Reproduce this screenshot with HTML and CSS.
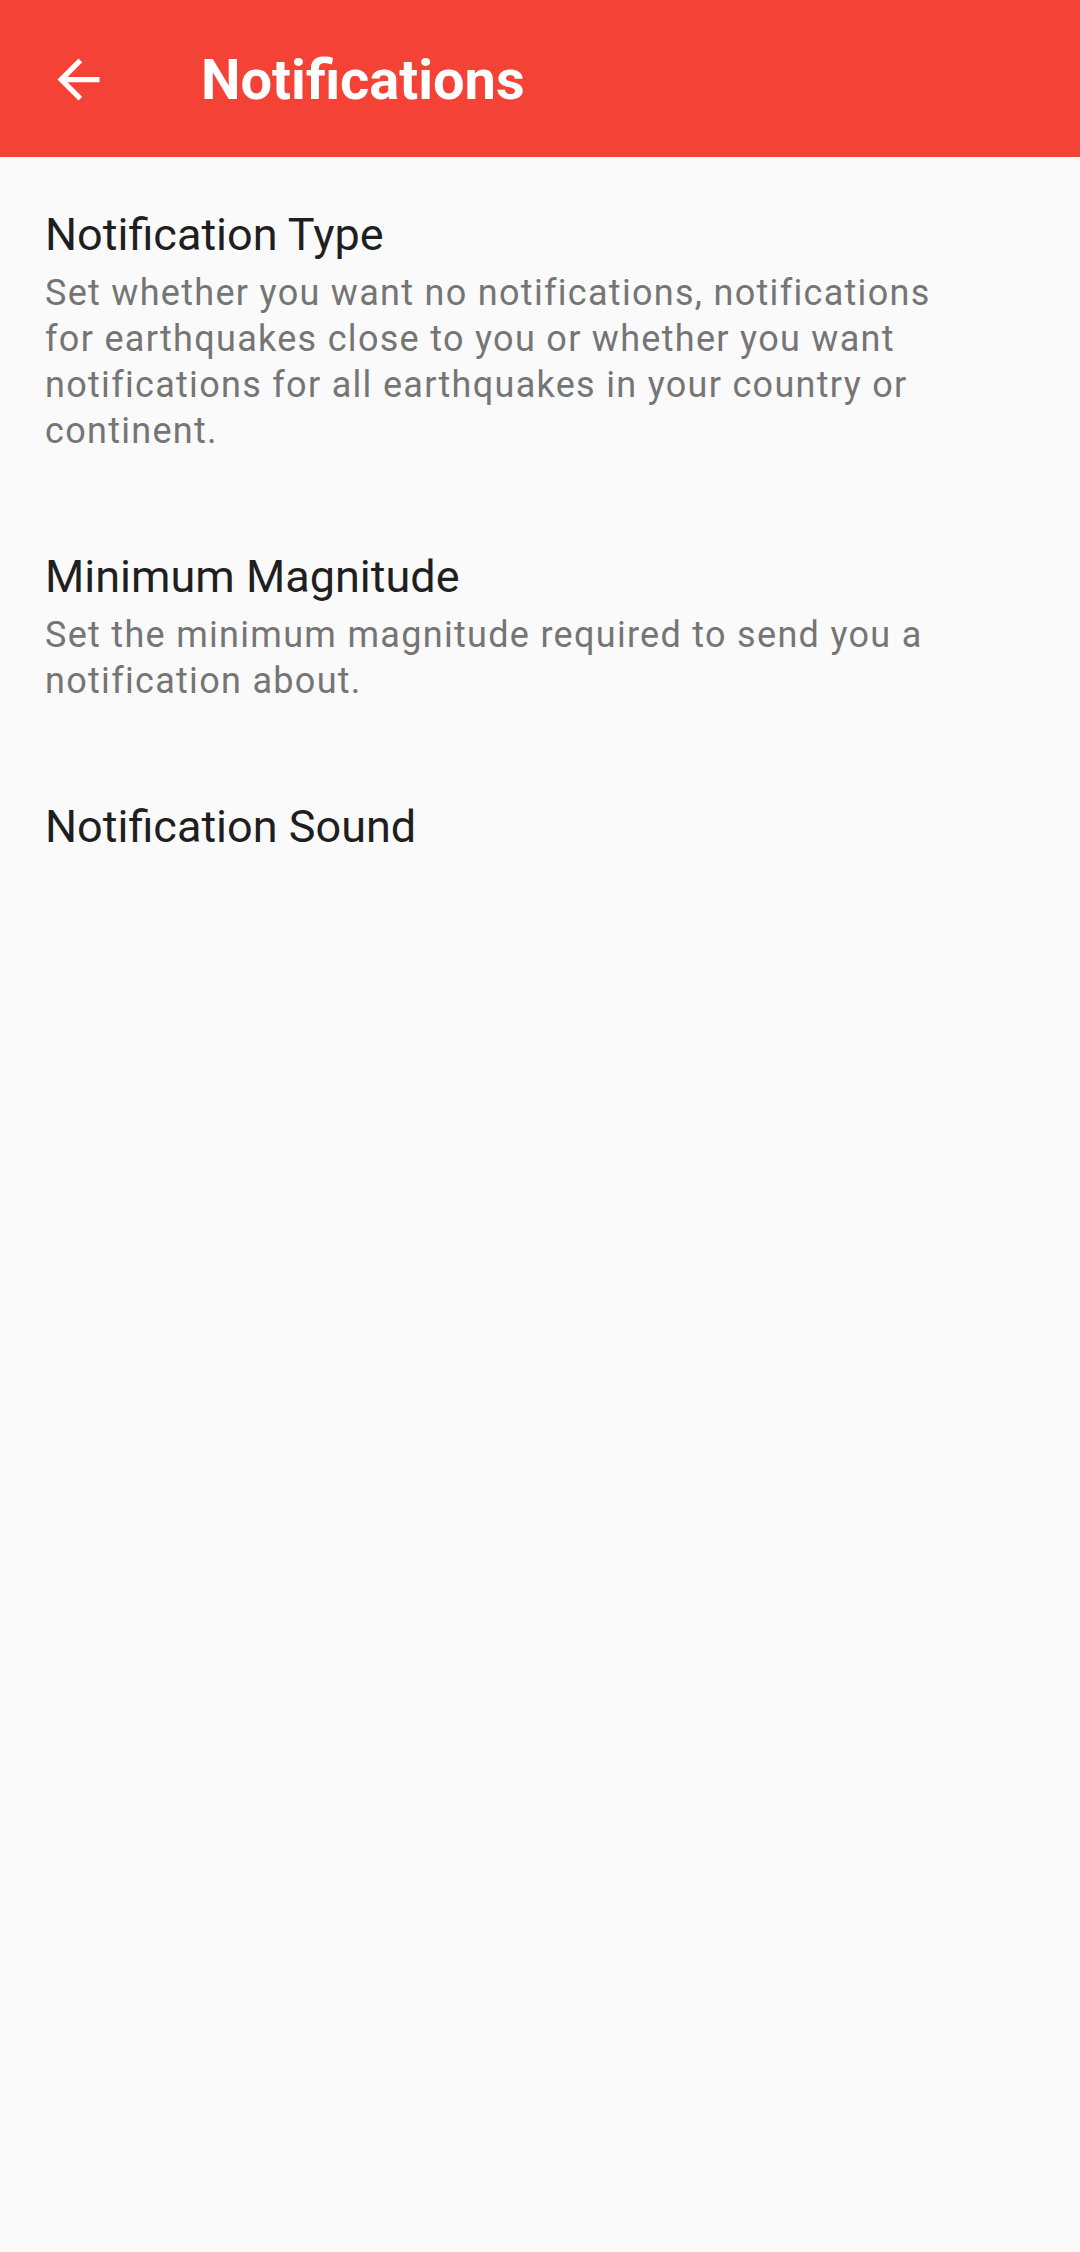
FILE: index.html
```html
<!DOCTYPE html>
<html lang="en">
<head>
  <meta charset="UTF-8">
  <meta name="viewport" content="width=device-width, initial-scale=1.0">
  <title>Notifications</title>
  <link rel="stylesheet" href="styles.css">
</head>
<body>

  <div class="toolbar">
    <button class="back" aria-label="Back">
      <svg viewBox="0 0 24 24" width="63" height="63">
        <path d="M20 11H7.83l5.59-5.59L12 4l-8 8 8 8 1.41-1.41L7.83 13H20v-2z" fill="#fff"/>
      </svg>
    </button>
    <h1>Notifications</h1>
  </div>

  <div class="prefs">
    <div class="pref">
      <div class="pref-title">Notification Type</div>
      <div class="pref-summary">Set whether you want no notifications, notifications for earthquakes close to you or whether you want notifications for all earthquakes in your country or continent.</div>
    </div>
    <div class="pref">
      <div class="pref-title">Minimum Magnitude</div>
      <div class="pref-summary">Set the minimum magnitude required to send you a notification about.</div>
    </div>
    <div class="pref">
      <div class="pref-title">Notification Sound</div>
    </div>
  </div>

</body>
</html>
```

FILE: styles.css
```css
body {
  font-family: Roboto, 'Noto Sans', sans-serif;
  background-color: #fafafa;
  margin: 0;
}

.toolbar {
  background-color: #f44336;
  height: 157px;
  display: flex;
  align-items: center;
}

.back {
  background: none;
  border: none;
  padding: 0;
  margin: 2px 0 0 47px;
  width: 63px;
  height: 63px;
  display: flex;
}

.toolbar h1 {
  margin: 0 0 0 91px;
  color: #fff;
  font-size: 56px;
  font-weight: 700;
  line-height: 66px;
  padding-top: 3px;
}

.pref {
  padding: 52px 110px 45px 45px;
}

.pref-title {
  font-size: 45px;
  line-height: 52px;
  color: #1f1f1f;
}

.pref-summary {
  margin-top: 9px;
  font-size: 36px;
  line-height: 46px;
  letter-spacing: 1.3px;
  color: #757575;
}
```
